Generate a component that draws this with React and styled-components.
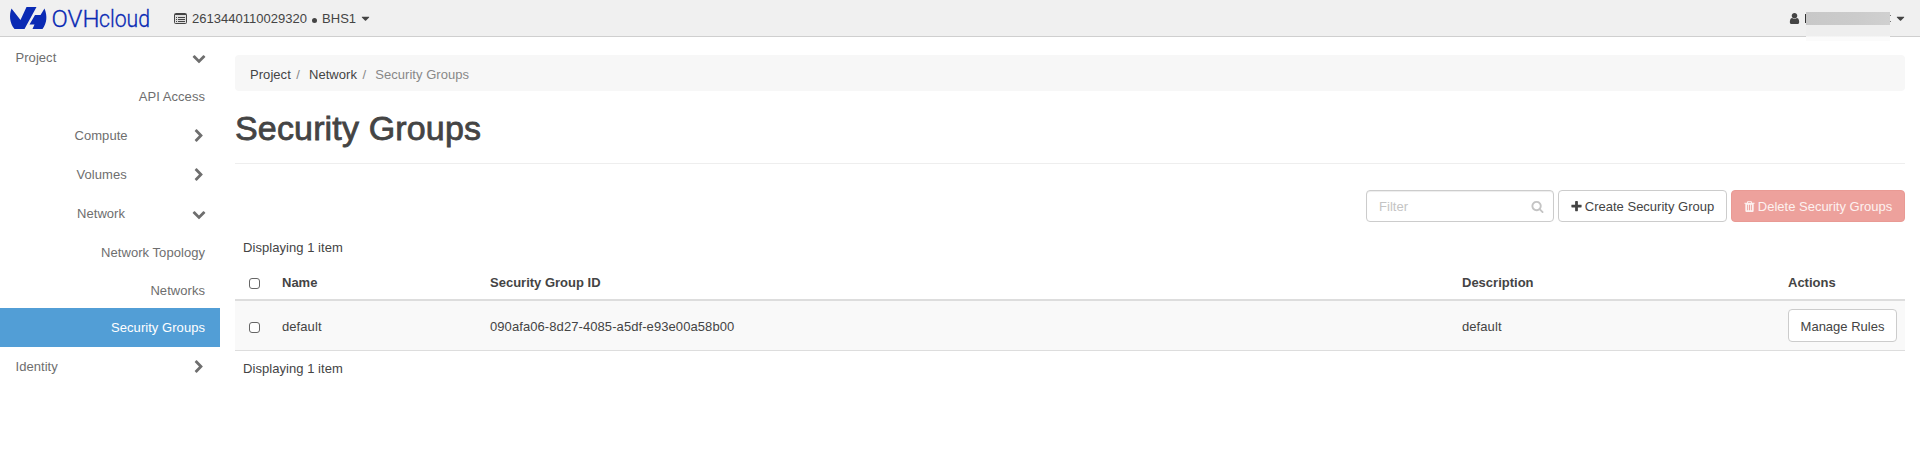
import React from "react";
import styled, { createGlobalStyle } from "styled-components";

const Global = createGlobalStyle`
  *, *::before, *::after { box-sizing: border-box; }
  body {
    margin: 0;
    background: #fff;
    color: #444;
    font: 13px/18px "Liberation Sans", Arial, sans-serif;
    letter-spacing: 0.05px;
  }
`;

const paths = {
  right: "M1363 877l-742 742q-19 19-45 19t-45-19l-166-166q-19-19-19-45t19-45l531-531-531-531q-19-19-19-45t19-45l166-166q19-19 45-19t45 19l742 742q19 19 19 45t-19 45z",
  down: "M1683 808l-742 741q-19 19-45 19t-45-19l-742-741q-19-19-19-45.500t19-45.500l166-165q19-19 45-19t45 19l531 531 531-531q19-19 45-19t45 19l166 165q19 19 19 45.500t-19 45.500z",
  caret: "M1408 704q0 26-19 45l-448 448q-19 19-45 19t-45-19l-448-448q-19-19-19-45t19-45 45-19h896q26 0 45 19t19 45z",
  search: "M1216 832q0-185-131.500-316.500t-316.500-131.500-316.500 131.500-131.500 316.500 131.500 316.500 316.500 131.500 316.500-131.500 131.500-316.500zm512 832q0 52-38 90t-90 38q-54 0-90-38l-343-342q-179 124-399 124-143 0-273.500-55.500t-225-150-150-225-55.500-273.500 55.500-273.500 150-225 225-150 273.500-55.500 273.500 55.500 225 150 150 225 55.500 273.500q0 220-124 399l343 343q37 37 37 90z",
  plus: "M1600 736v192q0 40-28 68t-68 28h-416v416q0 40-28 68t-68 28h-192q-40 0-68-28t-28-68v-416h-416q-40 0-68-28t-28-68v-192q0-40 28-68t68-28h416v-416q0-40 28-68t68-28h192q40 0 68 28t28 68v416h416q40 0 68 28t28 68z",
  trash: "M704 1376v-704q0-14-9-23t-23-9h-64q-14 0-23 9t-9 23v704q0 14 9 23t23 9h64q14 0 23-9t9-23zm256 0v-704q0-14-9-23t-23-9h-64q-14 0-23 9t-9 23v704q0 14 9 23t23 9h64q14 0 23-9t9-23zm256 0v-704q0-14-9-23t-23-9h-64q-14 0-23 9t-9 23v704q0 14 9 23t23 9h64q14 0 23-9t9-23zm-544-992h448l-48-117q-7-9-17-11h-317q-10 2-17 11zm928 32v64q0 14-9 23t-23 9h-96v948q0 83-47 143.500t-113 60.500h-832q-66 0-113-58.500t-47-141.500v-952h-96q-14 0-23-9t-9-23v-64q0-14 9-23t23-9h309l70-167q15-37 54-63t79-26h320q40 0 79 26t54 63l70 167h309q14 0 23 9t9 23z",
  user: "M1536 1399q0 109-62.500 187t-150.500 78h-854q-88 0-150.500-78t-62.500-187q0-85 8.500-160.500t31.500-152 58.500-131 94-89 134.500-34.500q131 128 313 128t313-128q76 0 134.500 34.500t94 89 58.500 131 31.500 152 8.500 160.500zm-256-887q0 159-112.500 271.500t-271.500 112.500-271.500-112.500-112.500-271.500 112.500-271.500 271.500-112.500 271.500 112.500 112.500 271.500z",
};

const Glyph = styled.svg`
  display: block;
  flex: none;
  width: ${(p) => p.$size || 13}px;
  height: ${(p) => p.$size || 13}px;
  fill: currentColor;
`;
const Icon = ({ name, size, className }) => (
  <Glyph className={className} $size={size} viewBox="0 0 1792 1792" aria-hidden="true">
    <path d={paths[name]} />
  </Glyph>
);

const TopBar = styled.header`
  display: flex;
  align-items: center;
  height: 37px;
  padding: 0 13px 0 10px;
  background: #f0f0f0;
  border-bottom: 1px solid #cfcfcf;
`;
const Logo = styled.svg`
  display: block;
  width: 144px;
  height: 36px;
  margin-right: 20px;
  overflow: visible;
`;
const LogoText = styled.text`
  font: 300 23.5px Roboto, sans-serif;
  letter-spacing: 0;
  fill: #0a2ab4;
  stroke: #0a2ab4;
  stroke-width: 0.3px;
`;
const ProjectPicker = styled.div`
  display: flex;
  align-items: center;
  height: 36px;
  padding-top: 1px;
  letter-spacing: 0.02px;
`;
const ListIcon = styled.svg`
  display: block;
  width: 13px;
  height: 11px;
  margin: -1px 5px 0 0;
`;
const Dot = styled.span`
  width: 5px;
  height: 5px;
  margin: 3px 5px 0 5px;
  border-radius: 50%;
  background: #444;
`;
const Caret = styled(Icon)`
  margin-left: 3px;
`;
const UserMenu = styled.div`
  display: flex;
  align-items: center;
  margin-left: auto;
`;
const NameStart = styled.span`
  width: 1px;
  height: 9px;
  margin-left: 4px;
  background: #333;
`;
const NameEnd = styled.span`
  width: 1px;
  height: 7px;
  border: solid #777;
  border-width: 1px 0;
`;
const RedactedName = styled.div`
  position: relative;
  width: 84px;
  height: 13px;
  background: linear-gradient(90deg, #c8c8c8, #cbcbcb 60%, #d0d0d0);

  &::after {
    content: "";
    position: absolute;
    top: 100%;
    left: 0;
    width: 100%;
    height: 16px;
    background: linear-gradient(#eee 11px, #fbfbfb 12px);
  }
`;

const Shell = styled.div`
  display: flex;
`;
const Sidebar = styled.nav`
  flex: none;
  width: 220px;
  display: flex;
  flex-direction: column;
  color: #6e6e6e;
`;
const NavItem = styled.a`
  display: flex;
  align-items: center;
  justify-content: ${(p) => (p.$leaf ? "flex-end" : "space-between")};
  height: ${(p) => p.$height || 39}px;
  padding: ${(p) => p.$top || 0}px ${(p) => (p.$leaf ? 15 : 14)}px 0 ${(p) => p.$indent || 15.5}px;
  background: ${(p) => (p.$active ? "#529ed6" : "transparent")};
  color: ${(p) => (p.$active ? "#fff" : "inherit")};
`;

const Main = styled.main`
  flex: 1;
  min-width: 0;
  padding: 18px 15px 0;
`;
const Breadcrumb = styled.div`
  display: flex;
  align-items: center;
  height: 36px;
  padding: 3px 15px 0;
  border-radius: 4px;
  background: #f7f7f7;
`;
const Slash = styled.span`
  padding: 0 9px 0 5.5px;
  color: #888;
`;
const Current = styled.span`
  color: #888;
`;
const Title = styled.h1`
  display: flex;
  align-items: center;
  height: 73px;
  margin: 0;
  padding-top: 1px;
  border-bottom: 1px solid #eee;
  font-size: 34px;
  line-height: 38px;
  font-weight: 400;
  letter-spacing: 0.16px;
  -webkit-text-stroke: 0.8px #444;
`;
const Toolbar = styled.div`
  display: flex;
  justify-content: flex-end;
  gap: 4px;
  margin-top: 26px;
`;
const Filter = styled.label`
  display: flex;
  align-items: center;
  justify-content: space-between;
  width: 188px;
  height: 32px;
  padding: 1px 9px 0 12px;
  border: 1px solid #ccc;
  border-radius: 4px;
  box-shadow: inset 0 1px 1px rgba(0, 0, 0, 0.075);
  color: #c4c4c4;
`;
const Button = styled.button`
  display: flex;
  align-items: center;
  justify-content: center;
  gap: 2px;
  width: ${(p) => p.$width}px;
  height: ${(p) => p.$height || 32}px;
  padding: 1px 1px 0 0;
  border: 1px solid ${(p) => (p.$danger ? "#e99a94" : "#ccc")};
  border-radius: 4px;
  background: ${(p) => (p.$danger ? "#eda19c" : "#fff")};
  color: ${(p) => (p.$danger ? "#fdf1f0" : "#444")};
  font: inherit;
  letter-spacing: 0;
`;
const RowButton = styled(Button)`
  margin-top: -2px;
  padding: 2px 0 0;
`;
const Count = styled.div`
  padding: ${(p) => p.$top}px 8px 0;
`;
const Table = styled.div`
  margin-top: 8px;
`;
const Row = styled.div`
  display: grid;
  grid-template-columns: 39px 208px 972px 326px 1fr;
  align-items: center;
  height: ${(p) => (p.$head ? 36 : 50)}px;
  padding: 2px 8px 0;
  font-weight: ${(p) => (p.$head ? 700 : 400)};
  letter-spacing: ${(p) => (p.$head ? 0 : 0.08)}px;
  background: ${(p) => (p.$head ? "transparent" : "#f9f9f9")};
  border-bottom: ${(p) => (p.$head ? 2 : 1)}px solid #ddd;
`;
const Checkbox = styled.input`
  appearance: none;
  display: block;
  width: 11px;
  height: 11px;
  margin: 1px 0 0 6px;
  border: 1px solid #666;
  border-radius: 3px;
  background: #fff;
`;

const nav = [
  { label: "Project", icon: "down", height: 40, top: 1 },
  { label: "API Access", leaf: true },
  { label: "Compute", icon: "right", indent: 74.5 },
  { label: "Volumes", icon: "right", indent: 76.5 },
  { label: "Network", icon: "down", indent: 77 },
  { label: "Network Topology", leaf: true },
  { label: "Networks", leaf: true, height: 36, top: 2 },
  { label: "Security Groups", leaf: true, active: true },
  { label: "Identity", icon: "right" },
];

export default function App() {
  return (
    <>
      <Global />
      <TopBar>
        <Logo viewBox="10 0 144 36" aria-label="OVHcloud">
          <path fill="#0a2ab4" d="M11.500 8.500L20.500 20 26.500 7H36.500L24.500 29H14.500C9.500 23 9 15 11.500 8.500zM44.500 8.500C47.500 16 47 23 42.500 29H32.500L34.500 24.500H29.500L35 15H40.500z" />
          <LogoText y="27.300">
            <tspan x="51.500" textLength="48" lengthAdjust="spacingAndGlyphs">OVH</tspan>
            <tspan x="99" textLength="51" lengthAdjust="spacingAndGlyphs">cloud</tspan>
          </LogoText>
        </Logo>
        <ProjectPicker>
          <ListIcon viewBox="0 0 13 11">
            <rect x="0.500" y="0.500" width="12" height="10" rx="1" fill="#ddd" stroke="#444" />
            <path d="M1 1.500h11M2 4.500h1M4 4.500h7M2 6.500h1M4 6.500h7M2 8.500h1M4 8.500h7" stroke="#444" />
          </ListIcon>
          2613440110029320<Dot />BHS1<Caret name="caret" />
        </ProjectPicker>
        <UserMenu>
          <Icon name="user" />
          <NameStart />
          <RedactedName />
          <NameEnd />
          <Caret name="caret" />
        </UserMenu>
      </TopBar>
      <Shell>
        <Sidebar>
          {nav.map((n) => (
            <NavItem key={n.label} $leaf={n.leaf} $active={n.active} $indent={n.indent} $height={n.height} $top={n.top}>
              {n.label}
              {n.icon && <Icon name={n.icon} size={14} />}
            </NavItem>
          ))}
        </Sidebar>
        <Main>
          <Breadcrumb>
            Project<Slash>/</Slash>Network<Slash>/</Slash><Current>Security Groups</Current>
          </Breadcrumb>
          <Title>Security Groups</Title>
          <Toolbar>
            <Filter>Filter<Icon name="search" /></Filter>
            <Button $width={169}><Icon name="plus" />Create Security Group</Button>
            <Button $width={174} $danger><Icon name="trash" />Delete Security Groups</Button>
          </Toolbar>
          <Count $top={17}>Displaying 1 item</Count>
          <Table>
            <Row $head>
              <Checkbox type="checkbox" />
              <span>Name</span><span>Security Group ID</span><span>Description</span><span>Actions</span>
            </Row>
            <Row>
              <Checkbox type="checkbox" />
              <span>default</span><span>090afa06-8d27-4085-a5df-e93e00a58b00</span><span>default</span>
              <RowButton $width={109} $height={33}>Manage Rules</RowButton>
            </Row>
          </Table>
          <Count $top={9}>Displaying 1 item</Count>
        </Main>
      </Shell>
    </>
  );
}
